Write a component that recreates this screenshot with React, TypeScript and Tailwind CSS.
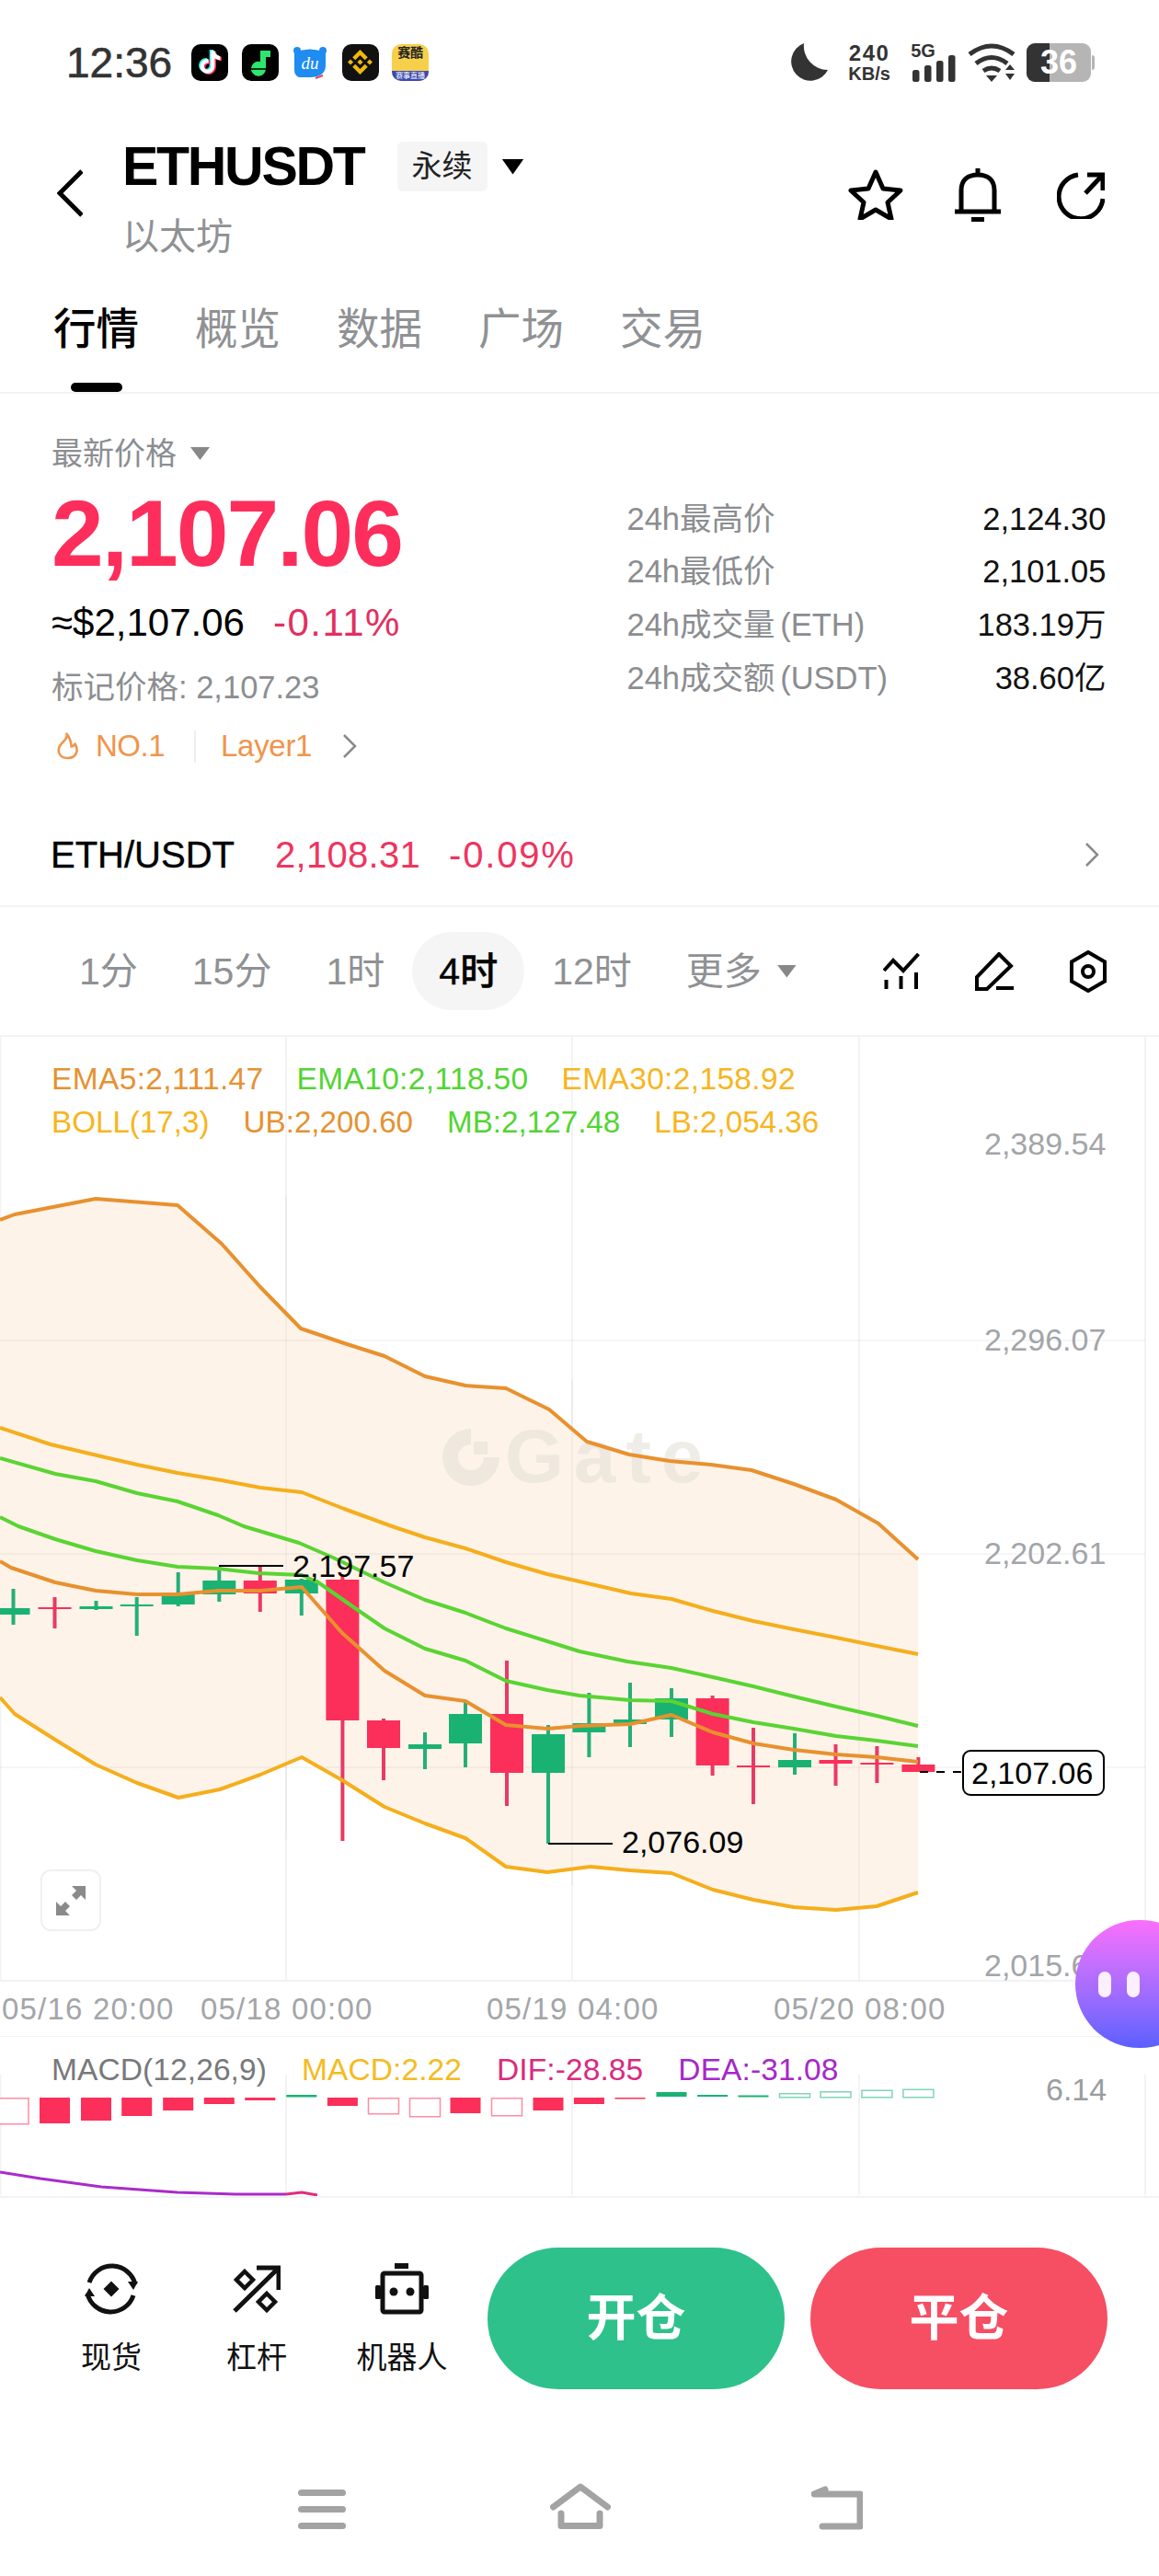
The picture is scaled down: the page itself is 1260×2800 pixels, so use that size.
import React from "react";
import { FaTiktok } from "react-icons/fa";
import { SiBinance } from "react-icons/si";

const RED = "#FB2F59";
const GREEN = "#19B273";

const upperBand = [[0,1327],[16,1321],[104,1304],[193,1311],[241,1353],[283,1400],[327,1445],[374,1461],[418,1475],[462,1497],[506,1507],[550,1510],[597,1533],[638,1568],[684,1582],[728,1589],[773,1593],[817,1599],[863,1614],[909,1631],[955,1657],[998,1696]];
const lowerBand = [[0,1846],[16,1864],[60,1892],[104,1919],[149,1939],[194,1955],[239,1946],[283,1930],[328,1911],[372,1936],[418,1965],[462,1983],[506,1999],[550,2030],[595,2036],[642,2030],[685,2034],[730,2037],[775,2055],[819,2066],[863,2074],[909,2077],[953,2073],[998,2058]];
const ema30 = [[0,1553],[55,1571],[110,1584],[149,1593],[193,1602],[241,1610],[283,1618],[328,1623],[374,1641],[426,1660],[462,1672],[506,1684],[550,1699],[595,1712],[630,1720],[686,1733],[730,1739],[775,1752],[819,1763],[863,1772],[909,1781],[953,1790],[998,1799]];
const midBand = [[0,1586],[60,1603],[104,1611],[149,1624],[193,1633],[237,1648],[265,1660],[325,1678],[362,1694],[418,1721],[462,1740],[506,1754],[550,1771],[595,1785],[630,1796],[682,1807],[730,1814],[775,1824],[819,1834],[863,1845],[909,1856],[953,1866],[998,1877]];
const ema10 = [[0,1650],[20,1660],[60,1674],[104,1687],[149,1697],[193,1704],[237,1706],[281,1711],[328,1713],[346,1721],[386,1749],[418,1771],[462,1793],[506,1806],[550,1828],[595,1838],[630,1844],[685,1849],[730,1850],[775,1864],[819,1873],[863,1880],[909,1888],[953,1893],[998,1899]];
const ema5 = [[0,1698],[12,1705],[60,1721],[104,1730],[149,1734],[193,1734],[237,1730],[283,1730],[328,1726],[372,1776],[418,1817],[462,1844],[506,1850],[550,1876],[595,1880],[630,1877],[685,1875],[730,1865],[775,1884],[819,1896],[863,1903],[909,1908],[953,1911],[998,1916]];

// x, wick top, wick bottom, body top, body bottom, up
const candles: [number, number, number, number, number, boolean][] = [
  [14.5,1728,1767,1749,1756,true],[59.5,1737,1771,1748,1750,false],[104.5,1741,1751,1747,1750,true],[148.7,1737,1779,1745,1747,true],
  [193.7,1710,1747,1734,1745,true],[238.3,1704,1742,1719,1734,true],[282.8,1703,1753,1719,1733,false],[327.8,1717,1757,1718,1733,true],
  [372.4,1714,2002,1718,1871,false],[417,1869,1936,1871,1901,false],[462,1884,1924,1897,1902,true],[506,1851,1922,1864,1896,true],
  [551,1806,1964,1864,1928,false],[596,1876,2005,1886,1928,true],[640.4,1841,1911,1874,1884,true],[685,1830,1900,1870,1875,true],
  [730,1836,1889,1847,1870,true],[774.6,1844,1931,1847,1920,false],[819,1879,1962,1920,1922,false],[864,1885,1930,1914,1922,true],
  [908.5,1897,1942,1914,1918,false],[953.4,1899,1939,1917,1919,false],[998.4,1911,1927,1919,1927,false],
];

// x, top, bottom, colour, hollow
const macdBars: [number, number, number, string, boolean][] = [
  [14.5,2281,2310,RED,true],[59.5,2281,2309,RED,false],[104.5,2281,2306,RED,false],[148.7,2281,2301,RED,false],[193.7,2281,2295,RED,false],
  [238.3,2281,2288,RED,false],[282.8,2281,2284,RED,false],[327.8,2278,2280.5,GREEN,false],[372.4,2281,2290,RED,false],[417,2281,2299,RED,true],
  [462,2281,2302,RED,true],[506,2281,2298,RED,false],[551,2281,2301,RED,true],[596,2281,2295,RED,false],[640.4,2281,2288,RED,false],
  [685,2281,2282.5,RED,false],[730,2275,2280,GREEN,false],[774.6,2278,2280,GREEN,false],[819,2278.5,2280.5,GREEN,false],[864,2276,2281,GREEN,true],
  [908.5,2274,2281,GREEN,true],[953.4,2272.5,2281,GREEN,true],[998.4,2271.5,2281,GREEN,true],
];

const pts = (p: number[][]) => p.map((q) => q.join(",")).join(" ");

function Line({ points, color }: { points: number[][]; color: string }) {
  return <polyline points={pts(points)} fill="none" stroke={color} strokeWidth="4" strokeLinejoin="round" />;
}

function Candle({ c }: { c: [number, number, number, number, number, boolean] }) {
  const [x, wt, wb, bt, bb, up] = c;
  const fill = up ? GREEN : RED;
  return (
    <g>
      <rect x={x - 2} y={wt} width="4" height={wb - wt} fill={up ? "#25AE78" : "#E83A64"} />
      <rect x={x - 18} y={bt} width="36" height={bb - bt} fill={fill} />
    </g>
  );
}

function KlineChart() {
  const labelClass = "fill-[#A3A5A9] text-[34px]";
  const timeClass = "fill-[#A3A5A9] text-[33px] tracking-[1.2px]";
  return (
    <svg className="block h-full w-full" viewBox="0 1128 1260 1086">
      {[0.5, 311, 622, 934, 1245].map((x) => (
        <line key={x} x1={x} x2={x} y1="1128" y2="2154" stroke="#F3F3F3" strokeWidth="2" />
      ))}
      <polygon points={pts([...upperBand, ...[...lowerBand].reverse()])} fill="#FDF3E9" />
      {[1458, 1690, 1922].map((y) => (
        <line key={y} x1="0" x2="1245" y1={y} y2={y} stroke="#000" strokeOpacity="0.035" strokeWidth="2" />
      ))}
      <line x1="311" x2="311" y1="1300" y2="2000" stroke="#000" strokeOpacity="0.03" strokeWidth="2" />
      <line x1="622" x2="622" y1="1500" y2="2050" stroke="#000" strokeOpacity="0.03" strokeWidth="2" />
      <line x1="934" x2="934" y1="1630" y2="2075" stroke="#000" strokeOpacity="0.03" strokeWidth="2" />
      <line x1="0" x2="1260" y1="2154" y2="2154" stroke="#F2F2F2" strokeWidth="2" />

      {/* watermark */}
      <g fill="#E5E1D9" fillOpacity="0.6">
        <path d="M512 1554A31 31 0 1 0 543 1585H526A14 14 0 1 1 512 1571Z" />
        <rect x="515" y="1568" width="15" height="14" />
        <text x="549" y="1612" fontWeight="700" fontSize="82" letterSpacing="11">Gate</text>
      </g>

      {candles.map((c) => (
        <Candle key={c[0]} c={c} />
      ))}

      <Line points={upperBand} color="#E8912E" />
      <Line points={ema30} color="#F5AE1C" />
      <Line points={midBand} color="#5AD433" />
      <Line points={ema10} color="#5AD433" />
      <Line points={lowerBand} color="#F5AE1C" />
      <Line points={ema5} color="#E8912E" />

      <line x1="238" x2="308" y1="1703" y2="1703" stroke="#000" strokeWidth="2" />
      <text x="318" y="1715" className="fill-black text-[34px]">2,197.57</text>
      <line x1="596" x2="666" y1="2005" y2="2005" stroke="#000" strokeWidth="2" />
      <text x="676" y="2015" className="fill-black text-[34px]">2,076.09</text>

      <line x1="1000" x2="1046" y1="1927" y2="1927" stroke="#000" strokeWidth="2" strokeDasharray="9 9" />
      <rect x="1047" y="1904" width="153" height="48" rx="8" fill="#fff" stroke="#000" strokeWidth="2" />
      <text x="1056" y="1940" className="fill-black text-[34px]">2,107.06</text>

      <text x="1070" y="1256" className={labelClass}>2,389.54</text>
      <text x="1070" y="1469" className={labelClass}>2,296.07</text>
      <text x="1070" y="1701" className={labelClass}>2,202.61</text>
      <text x="1070" y="2149" className={labelClass}>2,015.69</text>

      <text x="2" y="2196" className={timeClass}>05/16 20:00</text>
      <text x="218" y="2196" className={timeClass}>05/18 00:00</text>
      <text x="529" y="2196" className={timeClass}>05/19 04:00</text>
      <text x="841" y="2196" className={timeClass}>05/20 08:00</text>
    </svg>
  );
}

function MacdChart() {
  return (
    <svg className="block h-full w-full" viewBox="0 2214 1260 174">
      {[0.5, 311, 622, 934, 1245].map((x) => (
        <line key={x} x1={x} x2={x} y1="2256" y2="2387" stroke="#F3F3F3" strokeWidth="2" />
      ))}
      <line x1="0" x2="1260" y1="2214" y2="2214" stroke="#F2F2F2" strokeWidth="2" />
      {macdBars.map(([x, t, b, color, hollow]) =>
        hollow ? (
          <rect key={x} x={x - 16.5} y={t + 0.75} width="33" height={b - t - 1} fill="#fff" stroke={color} strokeOpacity="0.55" strokeWidth="1.5" />
        ) : (
          <rect key={x} x={x - 16.5} y={t} width="33" height={b - t} fill={color} />
        )
      )}
      <polyline points="0,2362 44,2369 110,2378 193,2384 257,2386 311,2386" fill="none" stroke="#A92BCB" strokeWidth="3" />
      <polyline points="311,2386 328,2384 345,2387" fill="none" stroke="#E02C7D" strokeWidth="3" />
      <text x="1137" y="2284" className="fill-[#9A9DA0] text-[34px]">6.14</text>
    </svg>
  );
}

function StatusBar() {
  return (
    <div className="mt-[47px] flex h-[41px] items-center pl-[72px]">
      <span className="text-[46px] leading-[44px] font-medium text-[#333] [-webkit-text-stroke:0.6px_#333]">12:36</span>
      <div className="ml-[21px] flex gap-[14.5px]">
        <div className="relative flex h-10 w-10 items-center justify-center rounded-[10px] bg-black">
          <FaTiktok className="absolute h-[25px] w-[25px] translate-x-[-1.5px] translate-y-[-1px] text-[#25F4EE]" />
          <FaTiktok className="absolute h-[25px] w-[25px] translate-x-[1.5px] translate-y-[1px] text-[#FE2C55]" />
          <FaTiktok className="absolute h-[25px] w-[25px] text-white" />
        </div>
        <div className="flex h-10 w-10 items-center justify-center rounded-[10px] bg-black">
          <svg viewBox="0 0 40 40" className="h-10 w-10">
            <path d="M20 7h11v7h-5v13a8 8 0 1 1-6-8z" fill="#2EE66E" />
            <path d="M8 27h24" stroke="#000" strokeWidth="1.5" />
          </svg>
        </div>
        <div className="flex h-10 w-10 items-center justify-center rounded-[10px] bg-white">
          <svg viewBox="0 0 40 40" className="h-10 w-10">
            <circle cx="6" cy="7" r="4" fill="#1E8CF0" />
            <circle cx="34" cy="7" r="4" fill="#1E8CF0" />
            <path d="M3 9q17-7 34 0v15q-1 12-17 12H8q-5-2-5-8z" fill="#1E8CF0" />
            <path d="M26 37l8-3" stroke="#E5484D" strokeWidth="2" />
            <text x="20" y="27" textAnchor="middle" fill="#fff" fontSize="19" fontStyle="italic" fontFamily="Liberation Serif">du</text>
          </svg>
        </div>
        <div className="flex h-10 w-10 items-center justify-center rounded-[10px] bg-[#111]">
          <SiBinance className="h-[27px] w-[27px] text-[#F0B90B]" />
        </div>
        <div className="relative flex h-10 w-10 flex-col items-center overflow-hidden rounded-[10px] bg-[#F7D04B]">
          <span className="mt-[2px] text-[14px] leading-[15px] font-bold text-[#222]">赛酷</span>
          <span className="mt-auto h-[11px] w-full bg-[#3C4BB0] text-center text-[8px] leading-[11px] text-white">赛事直播</span>
        </div>
      </div>

      <div className="ml-[392px] flex items-center">
        <svg viewBox="0 0 42 42" className="h-[42px] w-[42px]">
          <path d="M16 0A21 21 0 1 0 42 29 26 26 0 0 1 16 0Z" fill="#333" />
        </svg>
        <div className="ml-[21px] flex w-[48px] flex-col items-center font-bold text-[#333]">
          <span className="text-[24px] leading-[24px] tracking-[1.5px]">240</span>
          <span className="text-[20px] leading-[20px]">KB/s</span>
        </div>
        <div className="relative ml-[21px] h-[42px] w-[49px]">
          <span className="absolute left-0 top-[-2px] text-[20px] leading-[20px] font-bold text-[#333]">5G</span>
          <svg viewBox="0 0 49 42" className="h-[42px] w-[49px]">
            <rect x="2" y="29" width="7.5" height="13" rx="2.5" fill="#333" />
            <rect x="15" y="24" width="7.5" height="18" rx="2.5" fill="#333" />
            <rect x="28" y="19" width="7.5" height="23" rx="2.5" fill="#333" />
            <rect x="41" y="13" width="7.5" height="29" rx="2.5" fill="#333" />
          </svg>
        </div>
        <svg viewBox="0 0 52 42" className="ml-[13px] h-[42px] w-[52px]">
          <path d="M2 12Q26-6 50 12M9 22q17-13 34 0M17 30q9-6 18 0" fill="none" stroke="#333" strokeWidth="5" />
          <path d="M20 35h12l-6 7zM41 29l5-6 5 6zM41 33h10l-5 7z" fill="#333" />
        </svg>
        <div className="relative ml-[12px] flex h-[42px] w-[70px] overflow-hidden rounded-[9px] bg-[#B5B5B5]">
          <div className="h-full w-[25px] bg-[#333]" />
          <span className="absolute inset-0 text-center text-[36px] leading-[42px] font-bold text-white">36</span>
        </div>
        <div className="ml-[1px] h-[16px] w-[3px] rounded-r-sm bg-[#B5B5B5]" />
      </div>
    </div>
  );
}

function Header() {
  return (
    <div className="flex h-[340px] flex-col border-b-2 border-[#F3F3F3] pt-[66px]">
      <div className="flex h-[140px]">
        <svg viewBox="0 0 28 52" fill="none" className="ml-[62px] mt-[30px] h-[52px] w-[28px]">
          <path d="M27 2L3 26l24 24" stroke="#000" strokeWidth="5" />
        </svg>
        <div className="ml-[43px]">
          <div className="flex h-[54px] items-center">
            <span className="text-[59px] leading-[54px] font-bold tracking-[-2.3px] text-black">ETHUSDT</span>
            <span className="ml-[36px] flex h-[54px] w-[98px] items-center justify-center rounded-[6px] bg-[#F5F5F5] text-[33px] text-[#222]">永续</span>
            <div className="ml-[16px] h-[17px] w-[24px] bg-black [clip-path:polygon(0_0,100%_0,50%_100%)]" />
          </div>
          <div className="mt-[29px] text-[40px] leading-[40px] text-[#8F9194]">以太坊</div>
        </div>
        <div className="ml-auto mr-[59px] mt-[29px] flex h-[60px] items-start">
          <svg viewBox="0 0 60 56" fill="none" className="h-[56px] w-[60px]">
            <path d="M30 4l8 18 19 2-14 13 4 18-17-10-17 10 4-18L3 24l19-2z" stroke="#000" strokeWidth="5" strokeLinejoin="round" />
          </svg>
          <svg viewBox="0 0 50 58" fill="none" className="ml-[56px] h-[58px] w-[50px]">
            <path d="M7 46V24C7 12 15 7 25 7s18 5 18 17v22M25 0v7M0 47h50M18 55.5h14" stroke="#000" strokeWidth="5" />
          </svg>
          <svg viewBox="0 0 52 52" fill="none" className="ml-[61px] mt-[3px] h-[52px] w-[52px]">
            <path d="M23 4A24 24 0 1 0 50 30M31 24L49 5M33 4h17v17" stroke="#000" strokeWidth="5" />
          </svg>
        </div>
      </div>
      <div className="mt-[41px] flex gap-[61px] pl-[58px]">
        {["行情", "概览", "数据", "广场", "交易"].map((t, i) => (
          <div key={t} className="flex w-[93px] flex-col items-center">
            <span className={i === 0 ? "text-[46.5px] leading-[46px] font-medium text-black" : "text-[46.5px] leading-[46px] text-[#8F9194]"}>{t}</span>
            {i === 0 && <div className="mt-[35px] h-[10px] w-[56px] rounded-full bg-black" />}
          </div>
        ))}
      </div>
    </div>
  );
}

function Stat({ label, value }: { label: string; value: string }) {
  return (
    <div className="flex h-[57.7px] items-center justify-between text-[34.5px] leading-[40px]">
      <span className="text-[#8B8D90] [word-spacing:-4px]">{label}</span>
      <span className="text-[#111]">{value}</span>
    </div>
  );
}

function PriceSection() {
  return (
    <div className="h-[558px] border-b-2 border-[#F3F3F3]">
      <div className="flex h-[404px]">
        <div className="pl-[56px] pt-[48px]">
          <div className="flex items-center text-[34px] leading-[34px] text-[#8C8E91]">
            最新价格
            <div className="ml-[15px] h-[14px] w-[21px] bg-[#888] [clip-path:polygon(0_0,100%_0,50%_100%)]" />
          </div>
          <div className="mt-[19px] text-[102px] leading-[102px] font-bold tracking-[-2px] text-[#FD2E5B]">2,107.06</div>
          <div className="mt-[24px] flex text-[42px] leading-[44px]">
            <span className="text-black">≈$2,107.06</span>
            <span className="ml-[31px] tracking-[1.5px] text-[#E32F60]">-0.11%</span>
          </div>
          <div className="mt-[28px] text-[34.5px] leading-[40px] text-[#8C8E91]">标记价格: 2,107.23</div>
          <div className="mt-[24px] flex items-center text-[33px] leading-[40px] text-[#F0954C]">
            <svg viewBox="0 0 25 30" fill="none" className="ml-[5px] h-[30px] w-[25px]">
              <path d="M11.5 1.5C13 7 8 9 4.5 14 1 19 2.5 28 12.5 28 22 28 25 19.5 20.5 12.5 19.5 14.5 18 15.5 16.5 15.5 16.5 10 14.5 5.500 11.5 1.5Z" stroke="#F0954C" strokeWidth="2.6" strokeLinejoin="round" />
            </svg>
            <span className="ml-[18px] tracking-[-0.5px]">NO.1</span>
            <div className="ml-[32px] h-[35px] w-[2px] bg-[#EEE]" />
            <span className="ml-[27px] tracking-[-0.3px]">Layer1</span>
            <svg viewBox="0 0 16 26" fill="none" className="ml-[33px] h-[26px] w-[16px]">
              <path d="M2 1l12 12L2 25" stroke="#8A8A8A" strokeWidth="2.5" />
            </svg>
          </div>
        </div>
        <div className="ml-auto mr-[57.5px] w-[521px] pt-[106.7px]">
          <Stat label="24h最高价" value="2,124.30" />
          <Stat label="24h最低价" value="2,101.05" />
          <Stat label="24h成交量 (ETH)" value="183.19万" />
          <Stat label="24h成交额 (USDT)" value="38.60亿" />
        </div>
      </div>
      <div className="mt-[73px] flex h-[48px] items-center pl-[55px] text-[40px] leading-[48px]">
        <span className="font-medium text-black [-webkit-text-stroke:0.4px_#000]">ETH/USDT</span>
        <span className="ml-[44px] tracking-[0.3px] text-[#EE3560]">2,108.31</span>
        <span className="ml-[31px] tracking-[1.8px] text-[#EE3560]">-0.09%</span>
        <svg viewBox="0 0 16 26" fill="none" className="ml-auto mr-[65px] h-[26px] w-[16px]">
          <path d="M2 1l12 12L2 25" stroke="#8A8A8A" strokeWidth="2.5" />
        </svg>
      </div>
    </div>
  );
}

function TimeframeBar() {
  return (
    <div className="flex h-[141px] items-center border-b-2 border-[#F3F3F3] pl-[86px] text-[41px] leading-[44px] text-[#8F9194]">
      <div className="flex items-center gap-[59px]">
        <span>1分</span>
        <span>15分</span>
        <span>1时</span>
        <span className="-mx-[29px] flex h-[85px] w-[122px] items-center justify-center rounded-full bg-[#F5F5F5] font-medium text-black [-webkit-text-stroke:0.4px_#000]">4时</span>
        <span>12时</span>
        <span className="flex items-center">
          更多
          <div className="ml-[17px] h-[14px] w-[21px] bg-[#888] [clip-path:polygon(0_0,100%_0,50%_100%)]" />
        </span>
      </div>
      <svg viewBox="0 0 40 40" fill="none" className="ml-[94px] h-[40px] w-[40px]">
        <path d="M1 19L11 8l11 11L38.5 1M3.5 29v10M19.500 25v14M36 21v18" stroke="#000" strokeWidth="4" />
      </svg>
      <svg viewBox="0 0 42 42" fill="none" className="ml-[60px] h-[42px] w-[42px]">
        <path d="M26 2l13 13-26 25H2V27zM23 39h19" stroke="#000" strokeWidth="4" />
      </svg>
      <svg viewBox="0 0 40 46" fill="none" className="ml-[61px] h-[46px] w-[40px]">
        <path d="M20 2l18 10.500v21L20 44 2 33.500v-21z" stroke="#000" strokeWidth="4" />
        <circle cx="20" cy="23" r="6" stroke="#000" strokeWidth="4" />
      </svg>
    </div>
  );
}

function ChartLegend() {
  return (
    <div className="absolute left-[56px] top-[23px] leading-[46.5px]">
      <div className="flex gap-[36px] text-[33.5px] tracking-[0.35px]">
        <span className="text-[#E59233]">EMA5:2,111.47</span>
        <span className="text-[#53D433]">EMA10:2,118.50</span>
        <span className="text-[#F7B520]">EMA30:2,158.92</span>
      </div>
      <div className="flex gap-[37px] text-[33.2px]">
        <span className="text-[#F7B520]">BOLL(17,3)</span>
        <span className="text-[#E59233]">UB:2,200.60</span>
        <span className="text-[#53D433]">MB:2,127.48</span>
        <span className="text-[#F7B520]">LB:2,054.36</span>
      </div>
    </div>
  );
}

function ActionItem({ label, children }: { label: string; children: React.ReactNode }) {
  return (
    <div className="flex w-[100px] flex-col items-center pt-[15px]">
      <div className="flex h-[60px] items-center">{children}</div>
      <span className="mt-[27px] whitespace-nowrap text-[33px] leading-[36px] text-[#111]">{label}</span>
    </div>
  );
}

function ActionBar() {
  return (
    <div className="h-[312px] border-t-2 border-[#F3F3F3] pt-[54px]">
      <div className="flex pl-[71px]">
        <div className="flex gap-[58px]">
          <ActionItem label="现货">
            <svg viewBox="0 0 58 58" fill="none" className="h-[58px] w-[58px]">
              <path d="M5 22A26 26 0 0 1 55 24M53 36A26 26 0 0 1 3 34" stroke="#111" strokeWidth="5" />
              <path d="M47 21l11 0-5 9zM11 37H0l5-9z" fill="#111" />
              <rect x="23" y="23" width="12" height="12" transform="rotate(45 29 29)" fill="#111" />
            </svg>
          </ActionItem>
          <ActionItem label="杠杆">
            <svg viewBox="0 0 52 52" fill="none" className="h-[52px] w-[52px]">
              <path d="M2 50L50 3M26 3h24v24" stroke="#111" strokeWidth="5" />
              <path d="M13 7l9 9-9 9-9-9zM37 31l9 9-9 9-9-9z" stroke="#111" strokeWidth="4.5" />
            </svg>
          </ActionItem>
          <ActionItem label="机器人">
            <svg viewBox="0 0 58 56" fill="none" className="h-[56px] w-[58px]">
              <rect x="21" y="0" width="15" height="6" fill="#111" />
              <rect x="8" y="11" width="42" height="42" rx="2" stroke="#111" strokeWidth="5" />
              <rect x="0" y="24" width="6" height="15" rx="1.500" fill="#111" />
              <rect x="52" y="24" width="6" height="15" rx="1.500" fill="#111" />
              <circle cx="20" cy="31" r="4.500" fill="#111" />
              <circle cx="38" cy="31" r="4.500" fill="#111" />
            </svg>
          </ActionItem>
        </div>
        <div className="ml-[43px] flex gap-[28px] text-[54px] font-bold text-white">
          <div className="flex h-[154px] w-[323px] items-center justify-center rounded-full bg-[#2EC18B]">开仓</div>
          <div className="flex h-[154px] w-[323px] items-center justify-center rounded-full bg-[#F64E63]">平仓</div>
        </div>
      </div>
    </div>
  );
}

function NavBar() {
  return (
    <div className="flex items-start pl-[324px]">
      <div className="mt-[7px] flex w-[52px] flex-col gap-[11px]">
        <div className="h-[7px] rounded-full bg-[#A3A3A3]" />
        <div className="h-[7px] rounded-full bg-[#A3A3A3]" />
        <div className="h-[7px] rounded-full bg-[#A3A3A3]" />
      </div>
      <svg viewBox="0 0 66 50" fill="none" className="ml-[222px] h-[50px] w-[66px]">
        <path d="M3.500 26L33 4l29.500 22M12 33v13.500h42V33" stroke="#A3A3A3" strokeWidth="7" strokeLinecap="round" strokeLinejoin="round" />
      </svg>
      <svg viewBox="0 0 56 48" fill="none" className="ml-[218px] mt-[3px] h-[48px] w-[56px]">
        <path d="M15 4L3 9h50v35H12" stroke="#A3A3A3" strokeWidth="7" strokeLinecap="round" strokeLinejoin="round" />
      </svg>
    </div>
  );
}

export default function App() {
  return (
    <div className="relative h-[2800px] w-[1260px] overflow-hidden bg-white font-['Liberation_Sans','Noto_Sans_CJK_SC',sans-serif]">
      <StatusBar />
      <Header />
      <PriceSection />
      <TimeframeBar />
      <div className="relative h-[1086px]">
        <KlineChart />
        <ChartLegend />
        <div className="absolute left-[44px] top-[905px] flex h-[67px] w-[66px] items-center justify-center rounded-[11px] border-2 border-[#F0F0F0] bg-white">
          <svg viewBox="0 0 32 32" className="h-[32px] w-[32px]">
            <path d="M32 0v15l-5-5-5 5-5-5 5-5-5-5zM0 32V17l5 5 5-5 5 5-5 5 5 5z" fill="#8A8A8A" />
          </svg>
        </div>
      </div>
      <div className="relative h-[174px]">
        <MacdChart />
        <div className="absolute left-[56px] top-[19px] flex gap-[38px] text-[33.5px] leading-[36px] tracking-[0.1px]">
          <span className="text-[#77797C]">MACD(12,26,9)</span>
          <span className="text-[#F4BB22]">MACD:2.22</span>
          <span className="text-[#D92B7F]">DIF:-28.85</span>
          <span className="text-[#A628C8]">DEA:-31.08</span>
        </div>
      </div>
      <ActionBar />
      <NavBar />
      <div className="absolute left-[1169px] top-[2087px] flex h-[139px] w-[140px] items-center gap-[17px] rounded-full bg-linear-to-b from-[#F96FFC] to-[#5A5FFF] pl-[25px]">
        <div className="h-[28px] w-[14px] rounded-full bg-[#FBF0FF]" />
        <div className="h-[28px] w-[14px] rounded-full bg-[#FBF0FF]" />
      </div>
    </div>
  );
}
